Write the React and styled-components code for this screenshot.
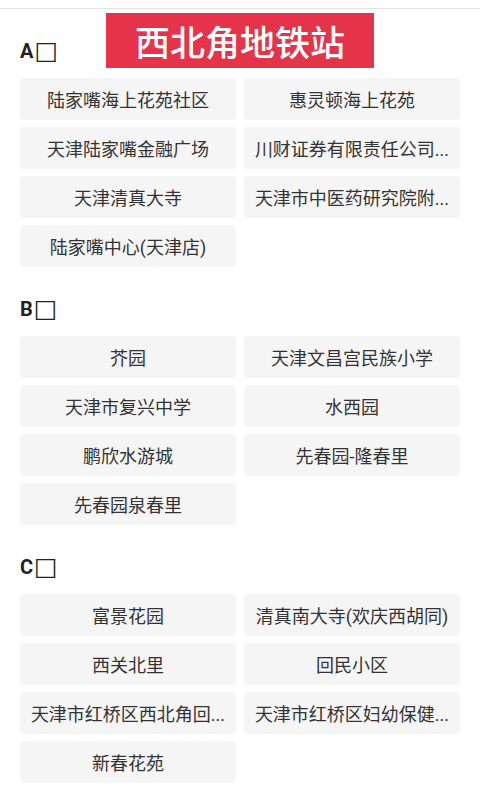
import React from 'react';
import styled, { createGlobalStyle } from 'styled-components';

const GlobalStyle = createGlobalStyle`
  html, body {
    margin: 0;
    padding: 0;
    background: #ffffff;
  }
  body {
    font-family: Roboto, "Noto Sans CJK SC", "Noto Sans", sans-serif;
  }
`;

const sections = [
  {
    letter: 'A',
    items: [
      '陆家嘴海上花苑社区',
      '惠灵顿海上花苑',
      '天津陆家嘴金融广场',
      '川财证券有限责任公司...',
      '天津清真大寺',
      '天津市中医药研究院附...',
      '陆家嘴中心(天津店)',
    ],
  },
  {
    letter: 'B',
    items: [
      '芥园',
      '天津文昌宫民族小学',
      '天津市复兴中学',
      '水西园',
      '鹏欣水游城',
      '先春园-隆春里',
      '先春园泉春里',
    ],
  },
  {
    letter: 'C',
    items: [
      '富景花园',
      '清真南大寺(欢庆西胡同)',
      '西关北里',
      '回民小区',
      '天津市红桥区西北角回...',
      '天津市红桥区妇幼保健...',
      '新春花苑',
    ],
  },
];

const Page = styled.div`
  position: relative;
  width: 480px;
  min-height: 800px;
  background: #fff;
`;

const TopBar = styled.div`
  height: 8px;
  border-bottom: 1px solid #e2e2e2;
`;

const Banner = styled.div`
  position: absolute;
  top: 13px;
  left: 50%;
  transform: translateX(-50%);
  width: 268px;
  height: 55px;
  background: #e5344a;
  color: #fff;
  display: flex;
  align-items: center;
  justify-content: center;
  font-family: "Noto Sans CJK SC", sans-serif;
  font-size: 35px;
  font-weight: 500;
`;

const Content = styled.div`
  padding: 0 20px;
`;

const Section = styled.section`
  display: flex;
  flex-direction: column;
`;

const Letter = styled.h2`
  margin: 30px 0 15px;
  height: 24px;
  line-height: 24px;
  font-size: 20px;
  font-weight: 700;
  color: #222;
  display: flex;
  align-items: center;
  gap: 1px;
`;

const Missing = styled.span`
  font-family: "DejaVu Sans", sans-serif;
  font-weight: 700;
  font-size: 25px;
  line-height: 24px;
  color: #222;
`;

const Grid = styled.div`
  display: grid;
  grid-template-columns: 1fr 1fr;
  column-gap: 8px;
  row-gap: 7px;
`;

const Chip = styled.div`
  height: 42px;
  border-radius: 4px;
  background: #f5f5f5;
  color: #333;
  display: flex;
  align-items: center;
  justify-content: center;
  padding: 0 8px;
  font-size: 18px;
  white-space: nowrap;
  overflow: hidden;
`;

export default function App() {
  return (
    <Page>
      <GlobalStyle />
      <TopBar />
      <Content>
        {sections.map((s) => (
          <Section key={s.letter}>
            <Letter>
              {s.letter}
              <Missing>□</Missing>
            </Letter>
            <Grid>
              {s.items.map((name) => (
                <Chip key={name}>{name}</Chip>
              ))}
            </Grid>
          </Section>
        ))}
      </Content>
      <Banner>西北角地铁站</Banner>
    </Page>
  );
}
